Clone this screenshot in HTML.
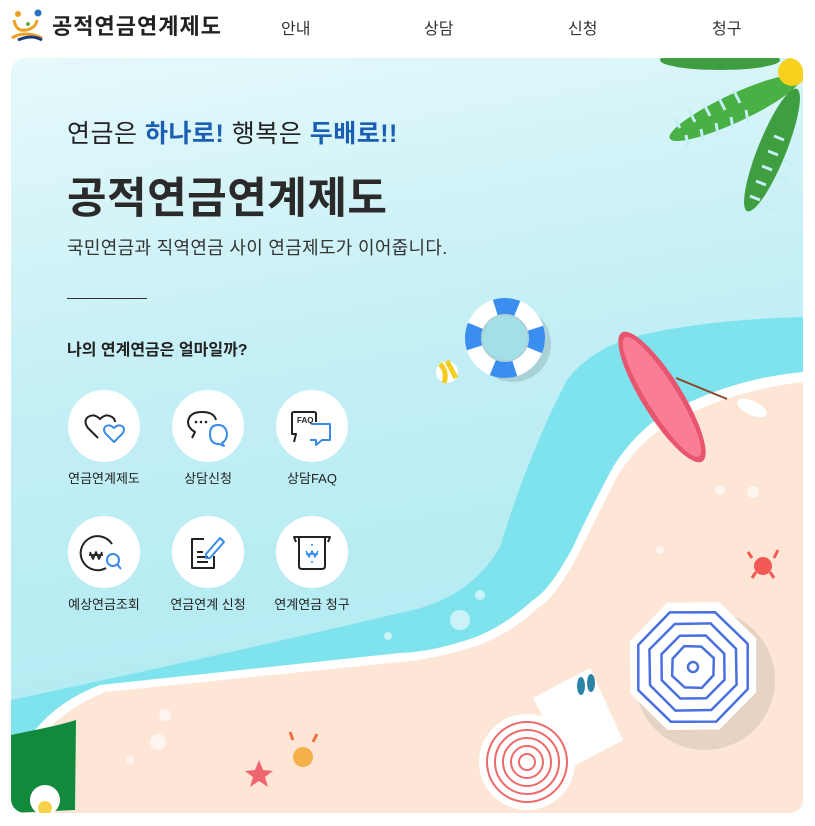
<!DOCTYPE html>
<html><head><meta charset="utf-8"><style>
*{margin:0;padding:0;box-sizing:border-box}
body{width:815px;height:826px;background:#fff;font-family:"Liberation Sans","Noto Sans CJK KR",sans-serif;position:relative;overflow:hidden;color:#222}
.nav{position:absolute;top:15px;font-size:16px;color:#333}
.card{position:absolute;left:11px;top:58px;width:792px;height:755px;border-radius:14px;overflow:hidden;background:linear-gradient(170deg,#e6f9fb 0%,#c3eff5 40%,#a8e8f0 100%)}
.t{position:absolute;white-space:nowrap}
.ic{position:absolute;width:72px;height:72px;border-radius:50%;background:#fff}
.ic svg{position:absolute;left:0;top:0}
.lb{position:absolute;width:120px;text-align:center;font-size:13px;color:#222}
</style></head><body>
<svg style="position:absolute;left:10px;top:8px" width="36" height="34" viewBox="0 0 36 34">
<circle cx="8" cy="6" r="3" fill="#f0a020"/><circle cx="28" cy="5" r="3.5" fill="#2a6fc0"/>
<path d="M4 12 Q6 24 16 22 Q26 20 27 12" fill="none" stroke="#f0a020" stroke-width="3"/>
<circle cx="18" cy="16" r="2" fill="#60b040"/>
<path d="M2 30 Q14 22 32 30" fill="none" stroke="#f0a020" stroke-width="3"/>
<path d="M8 32 Q22 26 32 32" fill="none" stroke="#1c3a80" stroke-width="3"/>
</svg>
<div class="t" style="left:52px;top:9px;font-size:22px;font-weight:bold;color:#222;letter-spacing:1px">공적연금연계제도</div>
<div class="nav" style="left:281px">안내</div>
<div class="nav" style="left:424px">상담</div>
<div class="nav" style="left:568px">신청</div>
<div class="nav" style="left:712px">청구</div>
<div class="card">
<svg style="position:absolute;left:0;top:0" width="792" height="755" viewBox="11 58 792 755">
<!-- dark sea -->
<path d="M803 317 Q700 320 633 337 Q590 350 567 380 Q530 450 500 547 Q470 600 400 613 Q200 660 11 700 L11 813 L803 813Z" fill="#7fe3ee"/>
<!-- white shore -->
<path d="M803 372 Q720 380 653 422 Q630 440 613 467 Q590 510 573 547 Q550 590 533 600 Q500 630 467 640 Q430 652 400 653 L100 685 Q60 700 35 730 L11 760 L11 813 L803 813Z" fill="#fff"/>
<path d="M803 382 Q720 392 660 430 Q635 448 618 475 Q595 520 578 555 Q555 598 538 608 Q505 638 470 648 Q430 660 400 662 L105 692 Q65 708 40 738 L11 770 L11 813 L803 813Z" fill="#fde6d6"/>
<!-- palm leaves -->
<g fill="#49b045"><ellipse cx="735" cy="108" rx="72" ry="14" transform="rotate(-25 735 108)"/>
<ellipse cx="772" cy="150" rx="66" ry="14" transform="rotate(-68 772 150)" fill="#3f9e40"/>
<ellipse cx="720" cy="60" rx="60" ry="10" fill="#3f9e40"/></g>
<g stroke="#c4eff5" stroke-width="3"><path d="M680 128 l-6 -10 M695 122 l-6 -12 M710 116 l-6 -12 M725 110 l-6 -12 M740 103 l-6 -12 M686 135 l2 12 M701 129 l2 12 M716 123 l2 12 M731 117 l2 12 M746 110 l2 12"/>
<path d="M760 200 l-10 -4 M766 185 l-10 -4 M772 170 l-10 -4 M778 155 l-10 -4 M784 140 l-10 -4 M765 205 l10 5 M771 190 l10 5 M777 175 l10 5 M783 160 l10 5"/></g>
<circle cx="792" cy="72" r="14" fill="#f6d21e"/>
<!-- ring -->
<circle cx="513" cy="344" r="38" fill="#000" opacity=".12"/>
<circle cx="505" cy="338" r="32" fill="none" stroke="#fff" stroke-width="16"/>
<circle cx="505" cy="338" r="32" fill="none" stroke="#3a8ef0" stroke-width="16" stroke-dasharray="22.5 27.7" stroke-dashoffset="10"/>
<circle cx="505" cy="338" r="22" fill="#a2dfe6"/>
<circle cx="447" cy="372" r="11" fill="#fff"/><path d="M440 364 Q448 372 444 383 M447 361 L456 378" stroke="#f5cc20" stroke-width="5" fill="none"/>
<!-- surfboard -->
<ellipse cx="662" cy="397" rx="20" ry="76" transform="rotate(-32 662 397)" fill="#e8556f"/>
<ellipse cx="662" cy="397" rx="15" ry="70" transform="rotate(-32 662 397)" fill="#fa7d96"/>
<path d="M676 378 L727 399" stroke="#8a4a2a" stroke-width="2"/>
<ellipse cx="752" cy="408" rx="16" ry="7" fill="#fff" transform="rotate(25 752 408)"/>
<!-- crab -->
<circle cx="763" cy="566" r="9" fill="#f25a55"/>
<path d="M752 558 l-4 -6 M774 558 l4 -8 M756 572 l-4 6 M770 572 l4 6" stroke="#f25a55" stroke-width="3"/>
<!-- towel & flipflops -->
<path d="M533 698 L590 668 L623 740 L570 768Z" fill="#fff"/>
<ellipse cx="581" cy="686" rx="4" ry="9" fill="#2b83a8"/><ellipse cx="591" cy="683" rx="4" ry="9" fill="#2b83a8"/>
<!-- blue umbrella -->
<circle cx="705" cy="680" r="70" fill="#e6d3c4"/>
<polygon points="693,597 741,617 761,667 741,715 693,735 645,715 625,667 645,617" fill="#fff" transform="rotate(22 693 667)"/>
<g fill="none" stroke="#4a70e0" stroke-width="2.5" transform="rotate(22 693 667)">
<polygon points="693,608 735,625 752,667 735,709 693,726 651,709 634,667 651,625"/>
<polygon points="693,620 726,634 740,667 726,700 693,714 660,700 646,667 660,634"/>
<polygon points="693,633 717,643 727,667 717,691 693,701 669,691 659,667 669,643"/>
<polygon points="693,645 709,651 715,667 709,683 693,689 677,683 671,667 677,651"/>
<circle cx="693" cy="667" r="5"/></g>
<!-- red umbrella -->
<circle cx="527" cy="762" r="48" fill="#fff"/>
<g fill="none" stroke="#ee6a6a" stroke-width="2"><circle cx="527" cy="762" r="40"/><circle cx="527" cy="762" r="32"/><circle cx="527" cy="762" r="24"/><circle cx="527" cy="762" r="16"/><circle cx="527" cy="762" r="8"/></g>
<!-- bottom small -->
<path d="M259 760 l4 10 10 1 -8 6 3 10 -9 -6 -9 6 3 -10 -8 -6 10 -1z" fill="#ef6670"/>
<circle cx="303" cy="757" r="10" fill="#f5b04a"/>
<path d="M293 740 l-3 -8 M313 742 l4 -8" stroke="#f07040" stroke-width="3"/>
<g fill="#fff" opacity=".6"><circle cx="165" cy="715" r="6"/><circle cx="158" cy="742" r="8"/><circle cx="130" cy="760" r="4"/><circle cx="460" cy="620" r="10"/><circle cx="480" cy="595" r="5"/><circle cx="388" cy="636" r="4"/><circle cx="753" cy="492" r="6"/><circle cx="720" cy="490" r="5"/><circle cx="660" cy="550" r="4"/></g>
<!-- monstera -->
<path d="M11 735 L35 730 Q60 725 76 720 L75 810 L11 813Z" fill="#128a3e"/>
<circle cx="45" cy="800" r="15" fill="#fff"/><circle cx="45" cy="808" r="7" fill="#f7d24a"/>
</svg>
<div class="t" style="left:56px;top:56px;font-size:25px;color:#222;letter-spacing:.5px">연금은 <b style="color:#1a5fb4">하나로!</b> 행복은 <b style="color:#1a5fb4">두배로!!</b></div>
<div class="t" style="left:56px;top:106px;font-size:43px;font-weight:bold;color:#2a2a2a;letter-spacing:.5px">공적연금연계제도</div>
<div class="t" style="left:56px;top:176px;font-size:18px;color:#333;letter-spacing:.3px">국민연금과 직역연금 사이 연금제도가 이어줍니다.</div>
<div style="position:absolute;left:56px;top:240px;width:80px;height:1px;background:#333"></div>
<div class="t" style="left:56px;top:278px;font-size:16px;font-weight:bold;color:#222">나의 연계연금은 얼마일까?</div>

<div class="ic" style="left:57px;top:332px"><svg width="72" height="72" fill="none" stroke-width="2" stroke-linejoin="round">
<path d="M30 48 L20 38 Q15 31 20 27 Q26 23 32 29 Q38 23 44 27 Q47 29 47 32" stroke="#222"/>
<path d="M46 52 L38 44 Q34 39 38 36 Q42 34 46 38 Q50 34 54 36 Q58 39 54 44Z" stroke="#3a8ae8"/></svg></div>
<div class="ic" style="left:161px;top:332px"><svg width="72" height="72" fill="none" stroke-width="2" stroke-linejoin="round">
<path d="M20 48 L23 42 Q16 38 16 32 Q17 22 30 22 Q42 22 44 30" stroke="#222"/>
<circle cx="24" cy="32" r="1.3" fill="#222" stroke="none"/><circle cx="29" cy="32" r="1.3" fill="#222" stroke="none"/><circle cx="34" cy="32" r="1.3" fill="#222" stroke="none"/>
<path d="M50 53 L52 56 L47 54 Q38 54 38 44 Q38 35 46 35 Q54 35 55 44 Q55 50 50 53Z" stroke="#3a8ae8"/></svg></div>
<div class="ic" style="left:265px;top:332px"><svg width="72" height="72" fill="none" stroke-width="2" stroke-linejoin="round">
<path d="M18 52 L20 44 L16 44 L16 24 Q16 22 18 22 L38 22 Q40 22 40 24 L40 32" stroke="#222"/>
<path d="M36 34 L54 34 L54 50 L46 50 L40 55 L40 50 L34 50" stroke="#3a8ae8"/>
<text x="21" y="33" font-size="8" font-weight="bold" fill="#222" stroke="none" font-family="Liberation Sans">FAQ</text></svg></div>

<div class="ic" style="left:57px;top:458px"><svg width="72" height="72" fill="none" stroke-width="2" stroke-linejoin="round">
<path d="M44 28 A17 17 0 1 0 38 52" stroke="#222"/>
<path d="M22 36 L25 43 L28 36 L31 43 L34 36 M21 39 L35 39" stroke="#222" stroke-width="1.8"/>
<circle cx="45" cy="44" r="6" stroke="#3a8ae8"/><path d="M49 48 L53 53" stroke="#3a8ae8"/></svg></div>
<div class="ic" style="left:161px;top:458px"><svg width="72" height="72" fill="none" stroke-width="2" stroke-linejoin="round">
<path d="M32 23 L20 23 L20 52 L42 52 L42 40" stroke="#222"/>
<path d="M25 36 L31 36 M25 41 L36 41 M25 46 L36 46" stroke="#222"/>
<path d="M34 38 L48 22 L52 26 L38 42 L34 42Z" stroke="#3a8ae8"/></svg></div>
<div class="ic" style="left:265px;top:458px"><svg width="72" height="72" fill="none" stroke-width="2" stroke-linejoin="round">
<path d="M20 26 L18 21 L54 21 L52 26 M23 22 L23 50 Q23 53 26 53 L46 53 Q49 53 49 50 L49 22" stroke="#222"/>
<path d="M30 35 L33 41 L36 35 L39 41 L42 35 M30 38 L42 38" stroke="#3a8ae8" stroke-width="1.5"/>
<circle cx="36" cy="29" r="1" fill="#3a8ae8" stroke="none"/><circle cx="36" cy="46" r="1" fill="#3a8ae8" stroke="none"/></svg></div>

<div class="lb" style="left:33px;top:410px">연금연계제도</div>
<div class="lb" style="left:137px;top:410px">상담신청</div>
<div class="lb" style="left:241px;top:410px">상담FAQ</div>
<div class="lb" style="left:33px;top:536px">예상연금조회</div>
<div class="lb" style="left:137px;top:536px">연금연계 신청</div>
<div class="lb" style="left:241px;top:536px">연계연금 청구</div>
</div>
</body></html>
